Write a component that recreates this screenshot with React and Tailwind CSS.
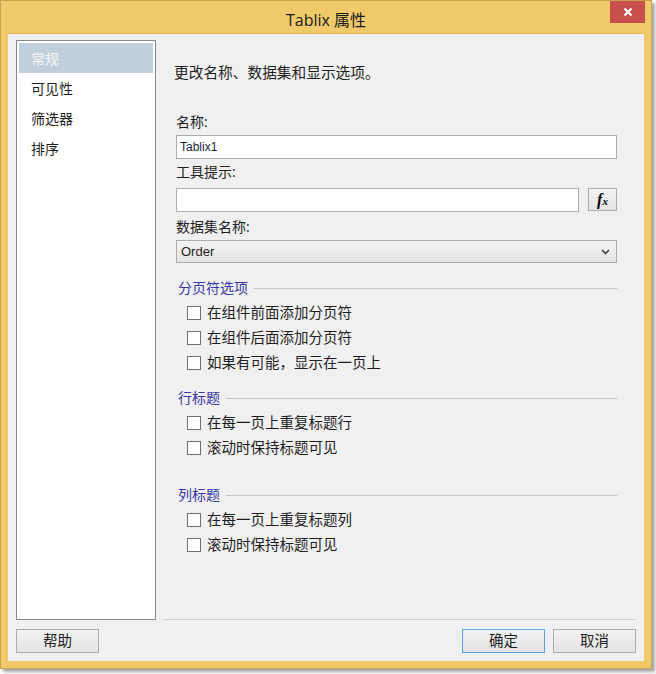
import React from 'react';

const font = { fontFamily: '"Open Sans", "Noto Sans CJK SC", sans-serif' };

const pages = ['常规', '可见性', '筛选器', '排序'];

function Check({ label }) {
  return (
    <label className="flex items-center h-[25px] pl-[11px] gap-[6px] text-[14.5px] leading-[18px] text-[#1e1e1e]">
      <span className="w-[14px] h-[14px] border border-[#707070] bg-white shrink-0" />
      {label}
    </label>
  );
}

function Group({ title, mt, items }) {
  return (
    <div className={mt}>
      <div className="flex items-center h-[18px] pl-[2px]">
        <span className="text-[14px] leading-[18px] text-[#3737a8]">{title}</span>
        <span className="flex-1 ml-[6px] h-px bg-[#c4c4c4] mt-[1px]" />
      </div>
      <div className="mt-[3px]">
        {items.map((t) => <Check key={t} label={t} />)}
      </div>
    </div>
  );
}

function Btn({ children, primary }) {
  return (
    <button
      className={`w-[83px] h-[24px] text-[14.5px] leading-[18px] text-[#1e1e1e] border bg-gradient-to-b from-[#f2f2f2] to-[#e4e4e4] ${primary ? 'border-[#5ba2e6]' : 'border-[#acacac]'}`}
    >
      {children}
    </button>
  );
}

export default function App() {
  return (
    <div className="w-[656px] h-[674px] bg-white" style={font}>
      <div className="w-[652px] h-[669px] bg-[#f0c96a] border border-[#c9a14f] flex flex-col shadow-[3px_3px_3px_rgba(0,0,0,0.35)]">
        {/* title bar */}
        <div className="h-[32px] relative flex items-center justify-center">
          <span className="text-[16px] leading-[20px] text-[#1a1a1a] mt-[5px]">Tablix 属性</span>
          <div className="absolute right-[6px] top-0 w-[35px] h-[22px] bg-[#c7504d] flex items-center justify-center">
            <svg width="10" height="10" viewBox="0 0 10 10">
              <path d="M1.5 1.5 L8.5 8.5 M8.5 1.5 L1.5 8.5" stroke="white" strokeWidth="2" />
            </svg>
          </div>
        </div>

        {/* client area */}
        <div className="mx-[7px] h-[628px] bg-[#f0f0f0] border-t border-[#e3b95b] pt-[6px] px-[8px] flex flex-col">
          <div className="flex h-[580px]">
            {/* page list */}
            <div className="w-[140px] h-full bg-white border border-[#828790] p-[2px]">
              {pages.map((p, i) => (
                <div
                  key={p}
                  className={`h-[30px] flex items-center pl-[12px] text-[14px] ${i === 0 ? 'bg-[#c1cedb] text-[#f7f7f7]' : 'text-[#1e1e1e]'}`}
                >
                  {p}
                </div>
              ))}
            </div>

            {/* properties page */}
            <div className="flex-1 ml-[7px] border-b border-[#cfcfcf] pl-[13px] pr-[19px] flex flex-col">
              <div className="mt-[22px] h-[20px] text-[14.7px] leading-[20px] text-[#1e1e1e] -ml-[2px]">更改名称、数据集和显示选项。</div>

              <div className="mt-[31px] text-[14px] leading-[18px] text-[#1e1e1e]">名称:</div>
              <div className="mt-[4px] h-[24px] bg-white border border-[#abadb3] flex items-center px-[3px] text-[12px] text-[#1e1e3c]" style={{ fontFamily: '"Liberation Sans", sans-serif' }}>
                Tablix1
              </div>

              <div className="mt-[4px] text-[14px] leading-[18px] text-[#1e1e1e]">工具提示:</div>
              <div className="mt-[7px] flex h-[24px]">
                <div className="flex-1 bg-white border border-[#abadb3]" />
                <button className="ml-[9px] w-[29px] h-[23px] border border-[#acacac] bg-gradient-to-b from-[#f4f4f4] to-[#e4e4e4] flex items-center justify-center">
                  <span className="font-bold italic text-[16px] leading-none text-black" style={{ fontFamily: '"Liberation Serif", serif' }}>
                    f<span className="text-[11px]">x</span>
                  </span>
                </button>
              </div>

              <div className="mt-[6px] text-[14px] leading-[18px] text-[#1e1e1e]">数据集名称:</div>
              <div className="mt-[4px] h-[23px] border border-[#acacac] bg-gradient-to-b from-[#f2f2f2] to-[#e5e5e5] flex items-center justify-between pl-[4px] pr-[6px]">
                <span className="text-[13px] text-[#1e1e1e]" style={{ fontFamily: '"Liberation Sans", sans-serif' }}>Order</span>
                <svg width="9" height="6" viewBox="0 0 9 6">
                  <path d="M1 1 L4.5 4.5 L8 1" stroke="#404040" strokeWidth="1.6" fill="none" />
                </svg>
              </div>

              <Group title="分页符选项" mt="mt-[16px]" items={['在组件前面添加分页符', '在组件后面添加分页符', '如果有可能，显示在一页上']} />
              <Group title="行标题" mt="mt-[14px]" items={['在每一页上重复标题行', '滚动时保持标题可见']} />
              <Group title="列标题" mt="mt-[26px]" items={['在每一页上重复标题列', '滚动时保持标题可见']} />
            </div>
          </div>

          <div className="mt-[9px] flex items-center">
            <Btn>帮助</Btn>
            <div className="flex-1" />
            <Btn primary>确定</Btn>
            <div className="w-[8px]" />
            <Btn>取消</Btn>
          </div>
        </div>
      </div>
    </div>
  );
}
